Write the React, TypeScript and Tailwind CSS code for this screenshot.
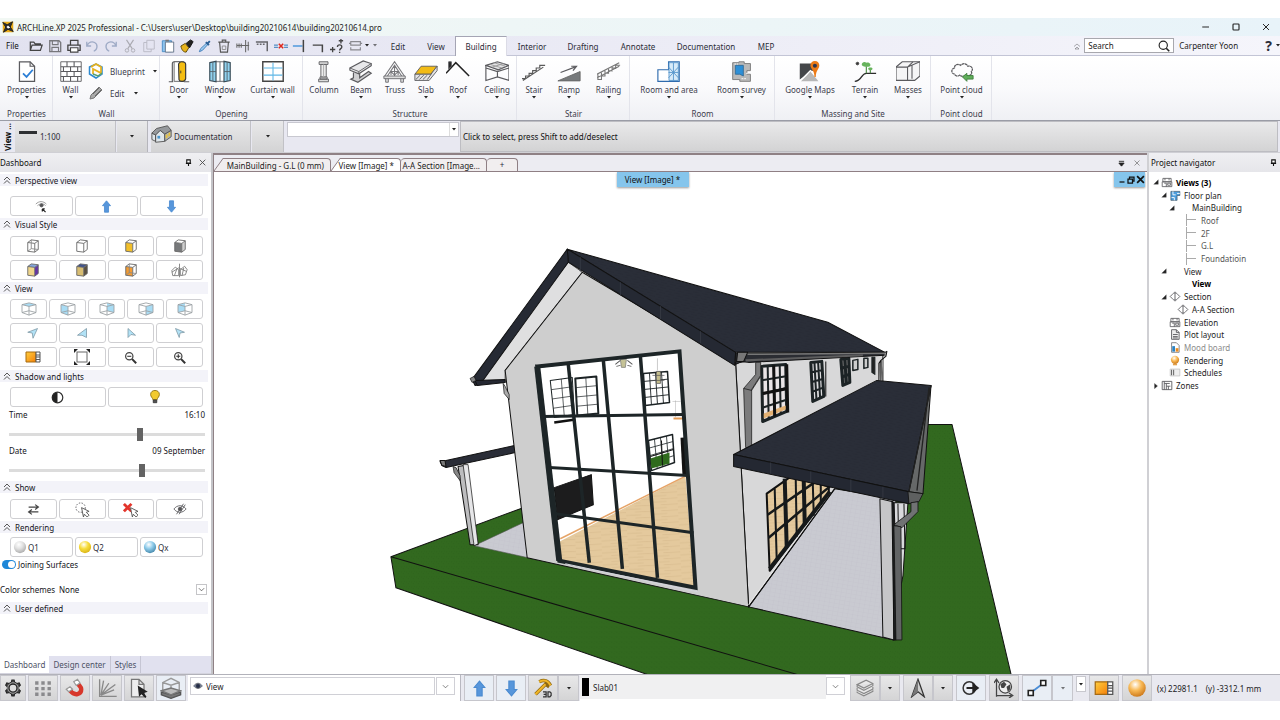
import { useState, type ReactNode } from "react";
import { clsx } from "clsx";

type Point = [number, number];
type Quad = [Point, Point, Point, Point];

interface IconProps {
  w?: number;
  h?: number;
  box?: string;
  children: ReactNode;
}

function Icon({ w = 16, h = 16, box = "0 0 16 16", children }: IconProps) {
  return (
    <svg width={w} height={h} viewBox={box} fill="none" stroke="#5a5a5e" strokeWidth="1" className="shrink-0" aria-hidden="true">
      {children}
    </svg>
  );
}

function Caret({ className = "" }: { className?: string }) {
  return (
    <svg width="4" height="3" viewBox="0 0 4 3" className={clsx("shrink-0", className)} aria-hidden="true">
      <path d="M0 0h4L2 2.6z" fill="#222" />
    </svg>
  );
}

/* ---------- Quick access icons ---------- */

const quickIcons: { name: string; art: ReactNode }[] = [
  { name: "Open", art: <path d="M1.500 13V3.500h4l1.500 2h6V7M1.500 13l2-6H15l-2 6z" strokeWidth="1.400" stroke="#444" /> },
  {
    name: "Save",
    art: (
      <>
        <path d="M2 2h10.500L14.500 4v10.500H2z" stroke="#77777c" strokeWidth="1.500" />
        <path d="M5 2v4.500h6.500V2M4.500 14.500V9.500h7.500v5" stroke="#77777c" strokeWidth="1.300" />
      </>
    ),
  },
  {
    name: "Print",
    art: (
      <>
        <path d="M4 7V1.500h8.500V7" stroke="#444" strokeWidth="1.400" />
        <path d="M1 7h14v6H1z" stroke="#444" strokeWidth="1.500" />
        <path d="M4 10h8.500v5H4z" fill="#fff" stroke="#444" strokeWidth="1.300" />
      </>
    ),
  },
  { name: "Undo", art: <path d="M2 3v5h5M2.500 7.500C4 3.500 8 2.500 11 4c4 2.200 3.500 8-1 10" stroke="#9fabc6" strokeWidth="1.500" /> },
  { name: "Redo", art: <path d="M14 3v5H9M13.500 7.500C12 3.500 8 2.500 5 4c-4 2.200-3.500 8 1 10" stroke="#9fabc6" strokeWidth="1.500" /> },
  {
    name: "Cut",
    art: (
      <>
        <path d="M4 1l6.500 10M12 1L5.500 11" stroke="#aaaab2" strokeWidth="1.300" />
        <circle cx="4.500" cy="13" r="2" stroke="#aaaab2" />
        <circle cx="11.500" cy="13" r="2" stroke="#aaaab2" />
      </>
    ),
  },
  { name: "Copy", art: <path d="M5.500 1.500H14v10H5.500zM5.500 4H2v10.500h8.500v-3" stroke="#b7b7c2" /> },
  {
    name: "Paste",
    art: (
      <>
        <path d="M1.500 2H12v12.500H1.500z" fill="#8ec4ee" stroke="#4389c4" />
        <path d="M5 3.500h9.500v11.500H5z" fill="#fff" stroke="#5b6d82" />
        <path d="M5 .8h4v2H5z" fill="#777" stroke="none" />
      </>
    ),
  },
  {
    name: "Match",
    art: (
      <>
        <path d="M1 8l5-3 4 5-3 5c-3 0-5-2-6-7z" fill="#e6b21c" stroke="#554000" />
        <path d="M7 5l5-4 3 2-4 7z" fill="#222" stroke="#111" />
      </>
    ),
  },
  {
    name: "Pick",
    art: (
      <>
        <path d="M1.500 14.500l1.500-3.500 6.500-6 1.500 1.500-6 6.500z" fill="#9cccf0" stroke="#3c78b6" />
        <path d="M9 3.500l3.500 3.500M11 5l2.500-2.500" stroke="#2b5f96" strokeWidth="2.200" />
      </>
    ),
  },
  {
    name: "Delete",
    art: (
      <>
        <path d="M1.500 3.500h13M6 3V1.300h4V3M3 4l1 11h8l1-11" stroke="#555" strokeWidth="1.300" />
        <path d="M6 8v4h4V8z" stroke="#888" />
      </>
    ),
  },
  { name: "Offset", art: <path d="M1 5v5M3.500 5v5M6 5v5M1 7.500h14M11 1v14M14 3v10" stroke="#666" strokeWidth="1.200" /> },
  { name: "Corner", art: <path d="M1 3.500h13V14M2 6h2M5.500 6h2M9 6h2" stroke="#66666b" strokeWidth="1.700" /> },
  {
    name: "Break",
    art: (
      <>
        <path d="M0 7h4.500M11.500 7H16M0 9.500h4.500M11.500 9.500H16" stroke="#568fc4" strokeWidth="1.300" />
        <path d="M5.500 5.500l5 5M10.500 5.500l-5 5" stroke="#dd2a20" strokeWidth="1.800" />
      </>
    ),
  },
  {
    name: "Extend",
    art: (
      <>
        <path d="M1 8h11" stroke="#4d98dc" strokeWidth="1.700" />
        <path d="M13 1v14" stroke="#444" strokeWidth="1.700" />
      </>
    ),
  },
  { name: "Trim", art: <path d="M2 7h11v8" stroke="#444" strokeWidth="1.700" /> },
  {
    name: "Add query",
    art: <path d="M0 12h6M3 9v6M10 2h5M12.500 0v5M8.500 9c0-3 5-3 5 0 0 2-2.500 2-2.500 4M11 14.500v1.500" stroke="#444" strokeWidth="1.500" />,
  },
  { name: "Layout", art: <path d="M2 3h11v4H2zM2 9.500v3h11v-3M0 5h2M13 5h2" stroke="#8a8a90" strokeWidth="1.300" /> },
];

/* ---------- Ribbon art, 24 x 24 each ---------- */

const ribbonArt: Record<string, ReactNode> = {
  Properties: (
    <>
      <path d="M4 1h12l5 5v17H4z" fill="#fff" strokeWidth="1.400" />
      <path d="M16 1v5h5" strokeWidth="1.300" />
      <path d="M8 14l4 4 7-8" stroke="#2c7fd6" strokeWidth="2" />
    </>
  ),
  Wall: (
    <>
      <path d="M1 1h23v22H1z" fill="#fff" />
      <path d="M1 6.500h23M1 12h23M1 17.500h23M8 1v5.500M16 1v5.500M4 6.500V12M12 6.500V12M20 6.500V12M8 12v5.500M16 12v5.500M4 17.500V23M12 17.500V23M20 17.500V23" strokeWidth="1.200" />
    </>
  ),
  Door: (
    <>
      <path d="M1 23.500h5M18 23.500h6M5 23.500V3.500Q5 1 7 1h7" strokeWidth="1.300" />
      <path d="M7 1h11v22H7z" fill="#fff" />
      <path d="M12 3.500Q13 1 15.500 1 20 1 20 4v16q-.5 3-4 3-3 0-3.500-2z" fill="#f4bd12" stroke="#373737" strokeWidth="1.300" />
      <path d="M14.500 11v3" stroke="#333" />
    </>
  ),
  Window: (
    <>
      <path d="M7 1h11v22H7z" fill="#fff" />
      <path d="M1 2l7-1.500v23L1 22zM24 2l-7-1.500v23l7-1.500z" fill="#90d2ef" stroke="#394c57" strokeWidth="1.300" />
      <path d="M1 12h7M17 12h7M4.500 1.500v21M20.500 1.500v21M12.500 1v22" stroke="#53626a" />
    </>
  ),
  "Curtain wall": (
    <>
      <path d="M1 1h23v22H1z" fill="#fff" stroke="#444" strokeWidth="1.600" />
      <path d="M12.500 2v20M2 8h21M2 16h21" stroke="#5fb7e6" strokeWidth="1.200" />
    </>
  ),
  Column: (
    <>
      <path d="M7 1h10v3H7zM6.500 20.500h11v3h-11zM8 18h8v2.500H8z" fill="#ddd" />
      <path d="M9 4h6v14H9z" fill="#ececec" />
      <path d="M12 4v14" stroke="#aaa" />
    </>
  ),
  Beam: (
    <>
      <path d="M4 13v6l-3 1.500 8 3.500 15-10-3-2-10 7v-5" fill="#cfcfd1" strokeWidth="1.300" />
      <path d="M0 8L15 0l9 3v2.500L10 14.500l-10-4z" fill="#e8e8ea" strokeWidth="1.300" />
      <path d="M0 8l10 4L24 3M10 12v2.500" />
    </>
  ),
  Truss: (
    <>
      <path d="M1 17L12 1l11 16M4 17l8-12 8 12M8 16v-5M16 16v-5M12 5v12M8 12l4 4 4-4z" stroke="#77777b" strokeWidth="1.200" />
      <path d="M0 17h24v3H0zM2 20v4h3v-4M19 20v4h3v-4" fill="#ddd" stroke="#69696d" />
    </>
  ),
  Slab: (
    <>
      <path d="M0 15L7 6h18l-7 9z" fill="#f2bb16" />
      <path d="M0 15h18l7-9v5l-9 11H0z" fill="#e4e4e6" />
      <path d="M1 21l5-5M5 21l5-5M9 21l5-5M14 21l5-7" />
    </>
  ),
  Roof: (
    <>
      <path d="M-1 14L10 2l15 15" stroke="#222" strokeWidth="1.700" />
      <path d="M2 1h3v5l-3 3z" fill="#222" />
    </>
  ),
  Ceiling: (
    <>
      <path d="M0 5l13-4 13 4-12 5z" fill="#e4e4e6" strokeWidth="1.300" />
      <path d="M0 5v17l13-4 13 4V5M0 8l13 4 13-4M13 11v7" strokeWidth="1.300" />
      <path d="M5 4l13 4M9 2l13 4M7 7l13-4" stroke="#999" />
    </>
  ),
  Stair: <path d="M-1 20h4v-3h4v-3h4v-3h4V8h4V5h6M0 22L23 7" stroke="#5a5a5a" strokeWidth="1.300" />,
  Ramp: (
    <>
      <path d="M0 22.500L25 12v10.500z" fill="#777a7c" stroke="#666" />
      <path d="M3 13l16-6M15 6h6l-4 5" strokeWidth="1.300" />
    </>
  ),
  Railing: <path d="M-1 15L24 2M-1 19L24 6M0 15v6h4v-4h4v-3h4v-3h4V8h4V5h5M4 12v6M8 10v6M12 8v6M16 6v6M20 4v5" stroke="#777" strokeWidth="1.200" />,
  "Room and area": (
    <>
      <path d="M0 10h12V1h12v22H0z" fill="#fff" stroke="#2f6bad" strokeWidth="1.300" />
      <path d="M12.500 2H23v20H12.500z" fill="#d8ebf9" stroke="#5594ca" />
      <path d="M12 13h11M17.500 2v20M12 7l11 12M23 7L12 19" stroke="#5594ca" />
    </>
  ),
  "Room survey": (
    <>
      <path d="M2 2h7V1h6v2h7v8h-4v4h4v8H10v-2H2z" fill="#b9b9b9" stroke="#777" />
      <path d="M5 5h9v12l-4-2H5v-5z" fill="#2d8fd6" stroke="#336b97" />
      <path d="M4 3.500h4M17 14h3M12 20h6" stroke="#fff" strokeDasharray="2 1" />
    </>
  ),
  "Google Maps": (
    <>
      <path d="M1 3h16v7L1 21z" fill="#444649" stroke="none" />
      <path d="M2 23l11-11 9 11z" fill="#b7b7b7" stroke="none" />
      <path d="M1 23L13 11l4 3" stroke="#fff" strokeWidth="1.500" />
      <path d="M18 0c3 0 5 2 5 5 0 4-4 6-4 13h-1.500c0-7-4.500-9-4.500-13 0-3 2-5 5-5z" fill="#ec7b17" stroke="none" />
      <circle cx="18" cy="5.500" r="2.300" fill="#2c3650" stroke="none" />
    </>
  ),
  Terrain: (
    <>
      <path d="M1 23c8 0 7-9 13-9h11" stroke="#2c2c2c" strokeWidth="1.500" />
      <path d="M14 14V6M18.500 14v-4" stroke="#4f8f48" strokeWidth="1.300" />
      <path d="M9 5c-1-3 3-5 5-3 3-1 6 2 4 4-2 1-7 1-9-1zM16 9c0-2 5-2 5 0-1 2-4 2-5 0z" fill="#67b35c" stroke="none" />
      <path d="M2.500 1.500l3 3M5.500 1.500l-3 3M2 3h4M4 1v4" stroke="#333" />
    </>
  ),
  Masses: (
    <>
      <path d="M-1 7l7-6h20v16l-6 5H-1z" fill="#f5f5f6" strokeWidth="1.300" />
      <path d="M-1 7h13v15M12 7l6-6M12 7l14-6M17 5v15" strokeWidth="1.200" />
    </>
  ),
  "Point cloud": (
    <>
      <path d="M4 15c-4-1-4-6 0-7 0-4 4-5 7-3 3-3 7-2 8 1 4-1 7 3 4 6 1 2 0 3-1 4-2 1-4 1-5 0-2 2-5 2-7 0-2 2-5 1-6-1z" strokeDasharray="3 .5" strokeWidth="1.400" />
      <path d="M13 18l5-4v2.500h7v4h-7V23z" fill="#60ae5b" stroke="#3d7e3b" />
    </>
  ),
};

interface Tool {
  label: string;
  width: string;
  menu?: boolean;
}

const toolGroups: { title: string; tools: Tool[] }[] = [
  {
    title: "Opening",
    tools: [
      { label: "Door", width: "w-[38px]" },
      { label: "Window", width: "w-11" },
      { label: "Curtain wall", width: "w-[61px]" },
    ],
  },
  {
    title: "Structure",
    tools: [
      { label: "Column", width: "w-[42px]", menu: false },
      { label: "Beam", width: "w-8" },
      { label: "Truss", width: "w-9", menu: false },
      { label: "Slab", width: "w-[26px]" },
      { label: "Roof", width: "w-[38px]" },
      { label: "Ceiling", width: "w-10" },
    ],
  },
  {
    title: "Stair",
    tools: [
      { label: "Stair", width: "w-[34px]" },
      { label: "Ramp", width: "w-9" },
      { label: "Railing", width: "w-[43px]" },
    ],
  },
  {
    title: "Room",
    tools: [
      { label: "Room and area", width: "w-[78px]" },
      { label: "Room survey", width: "w-[67px]" },
    ],
  },
  {
    title: "Massing and Site",
    tools: [
      { label: "Google Maps", width: "w-[70px]" },
      { label: "Terrain", width: "w-10" },
      { label: "Masses", width: "w-[46px]" },
    ],
  },
  { title: "Point cloud", tools: [{ label: "Point cloud", width: "w-[61px]" }] },
];

function RibbonButton({ label, width, menu = true }: Tool) {
  return (
    <button className={clsx("flex shrink-0 flex-col items-center whitespace-nowrap", width)}>
      <Icon w={24} h={24} box="-1 -1 27 27">{ribbonArt[label]}</Icon>
      <span className="leading-[11px]">{label}</span>
      {menu && <Caret className="mt-px" />}
    </button>
  );
}

function RibbonGroup({ title, children }: { title: string; children: ReactNode }) {
  return (
    <section className="flex shrink-0 flex-col shadow-[inset_-1px_0_0_#e3e4eb]">
      <div className="flex h-[51px] pt-1">{children}</div>
      <h2 className="text-center leading-[13px]">{title}</h2>
    </section>
  );
}

/* ---------- Title and menu ---------- */

function TitleBar() {
  return (
    <header className="flex h-[18px] items-center bg-linear-to-r from-[#f2f8f4] to-[#e8f3f9] pl-0.5 text-[#1b1b1b]">
      <Icon w={12} h={12}>
        <path d="M1 1h14v14H1z" fill="#e9ab18" stroke="none" />
        <path d="M1 2l6 3 7-4-3 7 4 6-7-3-6 4 3-7zM4 8l4-3 4 3-4 4z" fill="#333" stroke="#222" strokeWidth="1.300" />
        <path d="M6 8l2-2 3 3-3 1z" fill="#fff" stroke="none" />
      </Icon>
      <h1 className="ml-[3px] whitespace-nowrap">
        ARCHLine.XP 2025 Professional - C:\Users\user\Desktop\building20210614\building20210614.pro
      </h1>
      <div className="ml-auto flex items-center gap-[18px] pr-2">
        <button aria-label="Minimize"><Icon w={12} h={12}><path d="M3 8h9" stroke="#222" strokeWidth="1.300" /></Icon></button>
        <button aria-label="Maximize"><Icon w={12} h={12}><rect x="4" y="4" width="8" height="8" rx="1" stroke="#222" strokeWidth="1.500" /></Icon></button>
        <button aria-label="Close"><Icon w={12} h={12}><path d="M4 4l8 8M12 4l-8 8" stroke="#222" strokeWidth="1.300" /></Icon></button>
      </div>
    </header>
  );
}

const menuTabs = [
  { label: "Edit", width: "w-[38px]" },
  { label: "View", width: "w-[38px]" },
  { label: "Building", width: "w-[52px]" },
  { label: "Interior", width: "w-[50px]" },
  { label: "Drafting", width: "w-[52px]" },
  { label: "Annotate", width: "w-[58px]" },
  { label: "Documentation", width: "w-[78px]" },
  { label: "MEP", width: "w-[42px]" },
];

function MenuBar() {
  const [tab, setTab] = useState("Building");
  return (
    <div className="flex h-5 items-center border-b border-[#c3c5d6] bg-linear-to-r from-[#e2e2f0] to-[#f5f5fb]">
      <button className="w-[27px] shrink-0 pl-1.5 text-left text-[#111]">File</button>
      <div className="flex w-[338px] shrink-0 justify-between">
        {quickIcons.map((q) => (
          <button key={q.name} aria-label={q.name} className="flex w-[18px] justify-center">
            <Icon w={14} h={14}>{q.art}</Icon>
          </button>
        ))}
      </div>
      <Caret />
      <Caret className="ml-1 opacity-60" />
      <nav className="ml-0.5 flex h-full self-end">
        {menuTabs.map((t) => (
          <button
            key={t.label}
            onClick={() => setTab(t.label)}
            className={clsx(
              "h-5 shrink-0 border-x border-t pb-px",
              t.width,
              tab === t.label ? "border-[#a5a5b4] border-r-[#dcdce6] bg-white" : "border-transparent"
            )}
          >
            {t.label}
          </button>
        ))}
      </nav>
      <div className="ml-auto flex shrink-0 items-center">
        <Icon w={8} h={8}><path d="M2 9l6-5 6 5M4 14l4-4 4 4z" /></Icon>
        <label className="ml-[3px] flex h-[15px] w-[90px] items-center border border-[#a8a8ae] bg-white px-[3px]">
          <input aria-label="Search" placeholder="Search" className="w-full min-w-0 outline-none placeholder:text-[#222]" />
          <Icon w={12} h={12}>
            <circle cx="7" cy="7" r="5.500" stroke="#222" strokeWidth="1.500" />
            <path d="M11 11l4 4" stroke="#222" strokeWidth="2.200" />
          </Icon>
        </label>
        <span className="ml-[5px] w-[86px] whitespace-nowrap text-[#222]">Carpenter Yoon</span>
        <button className="flex items-center gap-1 text-sm leading-none font-bold">? <Caret /></button>
      </div>
    </div>
  );
}

function Ribbon() {
  return (
    <div className="flex h-[65px] border-b border-[#9a9ca6] bg-linear-to-b from-white via-[#fafafc] to-[#eff0f4] text-[#3c3d4c]">
      <RibbonGroup title="Properties">
        <RibbonButton label="Properties" width="w-[53px]" />
      </RibbonGroup>
      <RibbonGroup title="Wall">
        <RibbonButton label="Wall" width="w-[35px]" />
        <div className="flex w-[72px] flex-col">
          <button className="flex h-[22px] items-center">
            <Icon w={16} h={16}>
              <path d="M1.500 4L8 1l6 3v7l-6 4-6.500-4z" stroke="#2d89cf" strokeWidth="1.500" />
              <path d="M3 4l5-3 5 3v6L5 6v5" stroke="#e7b11d" strokeWidth="1.700" />
              <path d="M5 11l5 2 4-3" stroke="#56a06d" strokeWidth="1.500" />
            </Icon>
            <span className="ml-[6px] w-[43px] text-left">Blueprint</span>
            <Caret />
          </button>
          <button className="flex h-[22px] items-center">
            <Icon w={16} h={16}>
              <path d="M2 14l1-4 8-8 3 3-8 8z" fill="#a9a9a9" stroke="#777" />
              <path d="M5 9l6-6M7 11l6-6" stroke="#666" />
            </Icon>
            <span className="ml-[6px] w-6 text-left">Edit</span>
            <Caret />
          </button>
        </div>
      </RibbonGroup>
      {toolGroups.map((g) => (
        <RibbonGroup key={g.title} title={g.title}>
          {g.tools.map((t) => (
            <RibbonButton key={t.label} {...t} />
          ))}
        </RibbonGroup>
      ))}
    </div>
  );
}

const steel = "bg-linear-to-b from-[#e9e9ea] to-[#d3d3d4]";

function ViewBar() {
  return (
    <div className="flex h-8 items-stretch gap-px border-b border-[#cfcfd4] bg-[#e8e8f1]">
      <div className="flex w-[14px] shrink-0 items-center justify-center overflow-hidden">
        <span className="rotate-180 whitespace-nowrap font-bold text-[#111] [writing-mode:vertical-rl]">View ...</span>
      </div>
      <button className={clsx("flex w-[101px] shrink-0 items-center gap-[3px] border-r border-[#c1c1c6] pl-1", steel)}>
        <span className="mb-2 h-[3px] w-[18px] bg-[#2e3033]" />
        <span>1:100</span>
      </button>
      <button aria-label="Scale list" className={clsx("flex w-[31px] shrink-0 items-center justify-center border-r border-[#b5b5bb]", steel)}><Caret /></button>
      <button className={clsx("ml-0.5 flex w-[100px] shrink-0 items-center gap-px border-r border-[#c1c1c6]", steel)}>
        <span className="mb-1.5 flex">
          <Icon w={22} h={20} box="0 2 24 20">
            <path d="M1 11l4 2v7l-4-2zM5 13l5-5 5 4v8l-10 1z" fill="#dfe6ea" stroke="#555" />
            <path d="M15 12l7-4v7l-7 5z" fill="#b0b5b9" stroke="#555" />
            <path d="M1 11l5-5 12-3 4 5-7 4-5-4-5 5z" fill="#96999c" stroke="#555" />
            <path d="M7 14h3v3H7z" fill="#4a95cc" stroke="none" />
            <path d="M16 13l2-1v4l-2 1zM19 11l2-1v4l-2 1z" fill="#e8c23b" stroke="none" />
          </Icon>
        </span>
        <span>Documentation</span>
      </button>
      <button aria-label="Documentation list" className={clsx("flex w-8 shrink-0 items-center justify-center border-r border-[#c1c1c6]", steel)}><Caret /></button>
      <div className="w-[174px] shrink-0 pt-px pl-0.5">
        <div className="flex h-[15px] border border-[#c8c8d0] bg-white">
          <input aria-label="Command" className="min-w-0 flex-1 outline-none" />
          <button aria-label="Command history" className="flex w-[9px] items-center justify-center border-l border-[#ddd]"><Caret /></button>
        </div>
      </div>
      <p className={clsx("mr-0.5 flex flex-1 items-center border border-[#bdbdc2] pl-0.5 text-[#111]", steel)}>
        Click to select, press Shift to add/deselect
      </p>
    </div>
  );
}

/* ---------- Dashboard ---------- */

function SectionTitle({ children, className = "" }: { children: ReactNode; className?: string }) {
  return (
    <h3 className={clsx("mr-[3px] flex h-3 items-center gap-1 bg-[#f3f3f9] pl-[3px] text-[#15151c]", className)}>
      <Icon w={8} h={8}><path d="M2 8l6-6 6 6M2 15l6-6 6 6" stroke="#444" strokeWidth="1.800" /></Icon>
      {children}
    </h3>
  );
}

function ToolGrid({ columns, children, className = "" }: { columns: string; children: ReactNode; className?: string }) {
  return <div className={clsx("mr-2 ml-2.5 grid gap-x-0.5 gap-y-1", columns, className)}>{children}</div>;
}

function Tile({ name, children, left = false }: { name?: string; children: ReactNode; left?: boolean }) {
  return (
    <button
      aria-label={name}
      className={clsx("flex h-5 items-center rounded-[3px] border border-[#cfcfd2] bg-white", left ? "gap-px pl-0.5" : "justify-center")}
    >
      {children}
    </button>
  );
}

function Cube({ front = "#fff", side = "#fff", top = "#fff", hidden = false }: { front?: string; side?: string; top?: string; hidden?: boolean }) {
  return (
    <Icon w={14} h={14}>
      <path d="M2 4l8 1v10l-8-1z" fill={front} stroke="none" />
      <path d="M10 5l4-3v10l-4 3z" fill={side} stroke="none" />
      <path d="M2 4l4-3 8 1-4 3z" fill={top} stroke="none" />
      <path d="M2 4l4-3 8 1v10l-4 3-8-1zM2 4l8 1v10M10 5l4-3" stroke="#666" />
      {hidden && <path d="M6 1v10l8 1M6 11l-4 3" stroke="#888" />}
    </Icon>
  );
}

function BoxView({ face }: { face: string }) {
  return (
    <Icon w={18} h={14} box="0 0 20 16">
      <path d={face} fill="#a9dcf4" stroke="none" />
      <path d="M2 3l8-2 8 2v9l-8 3-8-3zM2 3l8 2 8-2M10 5v10M2 12l8-2 8 2" stroke="#9aa0a4" />
    </Icon>
  );
}

const boxFaces = [
  { name: "Top view", face: "M2 3l8-2 8 2-8 2z" },
  { name: "Left view", face: "M2 3l8 2v10l-8-3z" },
  { name: "Back view", face: "M10 1l8 2v9l-8-2z" },
  { name: "Right view", face: "M18 3l-8 2v10l8-3z" },
  { name: "Front view", face: "M2 3l8-2v9l-8 2z" },
];

const planes = ["M1 7l13-5-6 13-1-7z", "M14 14V2L2 11l6 0z", "M4 2v12l4-4 6 1z", "M2 2l12 5-6 1-1 6z"];

function ArrowUp({ size = 14 }: { size?: number }) {
  return <Icon w={size} h={size}><path d="M8 1l5 6h-2.500v8h-5V7H3z" fill="#5796db" stroke="#4a8ad0" /></Icon>;
}

function ArrowDown({ size = 14 }: { size?: number }) {
  return <Icon w={size} h={size}><path d="M8 15l5-6h-2.500V1h-5v8H3z" fill="#5796db" stroke="#4a8ad0" /></Icon>;
}

function Film({ size = 16 }: { size?: number }) {
  return (
    <Icon w={size} h={size}>
      <path d="M1 3h10v10H1z" fill="url(#film)" stroke="#a66a10" />
      <path d="M11 3h4v10h-4zM11 6h4M11 8h4M11 10.500h4" fill="#fff" stroke="#555" />
    </Icon>
  );
}

function Zoomer({ plus = false }: { plus?: boolean }) {
  return (
    <Icon w={13} h={13}>
      <circle cx="6.500" cy="6.500" r="4.500" stroke="#444" strokeWidth="1.500" />
      <path d="M10 10l5 5" stroke="#333" strokeWidth="2.500" />
      <path d={plus ? "M4 6.500h5M6.500 4v5" : "M4 6.500h5"} stroke="#333" strokeWidth="1.300" />
    </Icon>
  );
}

function Cursor({ x, y }: { x: number; y: number }) {
  return <path transform={`translate(${x} ${y})`} d="M0 0l8 4-3 1 3 3-2 2-3-3-1 3z" fill="#fff" stroke="#555" />;
}

function Ball({ id, size = 15 }: { id: string; size?: number }) {
  return (
    <svg width={size} height={size} viewBox="0 0 16 16" className="shrink-0" aria-hidden="true">
      <circle cx="8" cy="8" r="7" fill={`url(#${id})`} />
    </svg>
  );
}

function TimeSlider({ label, value, start, max }: { label: string; value: string; start: number; max: number }) {
  const [pos, setPos] = useState(start);
  return (
    <label className="mr-1.5 ml-[9px] block h-9">
      <span className="flex h-3 items-center justify-between text-[#15151c]">
        <span>{label}</span>
        <span>{value}</span>
      </span>
      <input
        type="range"
        min={0}
        max={max}
        value={pos}
        onChange={(e) => setPos(Number(e.target.value))}
        className="mt-1.5 block h-4 w-full appearance-none bg-transparent [&::-webkit-slider-runnable-track]:h-[3px] [&::-webkit-slider-runnable-track]:bg-[#dcdcdc] [&::-webkit-slider-thumb]:-mt-[5px] [&::-webkit-slider-thumb]:h-[13px] [&::-webkit-slider-thumb]:w-1.5 [&::-webkit-slider-thumb]:appearance-none [&::-webkit-slider-thumb]:bg-[#636363]"
      />
    </label>
  );
}

function Dashboard() {
  const [joined, setJoined] = useState(true);
  return (
    <aside className="flex w-[213px] shrink-0 flex-col border-r-2 border-[#c4c4c8] bg-white">
      <div className="flex h-[19px] shrink-0 items-center bg-linear-to-b from-[#efeff2] to-[#e6e6ea] text-[#111]">
        <h2>Dashboard</h2>
        <button aria-label="Pin dashboard" className="ml-auto"><Pin /></button>
        <button aria-label="Close dashboard" className="mr-1 ml-[6px]"><Icon w={9} h={9}><path d="M3 3l10 10M13 3L3 13" stroke="#444" strokeWidth="1.500" /></Icon></button>
      </div>

      <SectionTitle className="mt-0.5">Perspective view</SectionTitle>
      <ToolGrid columns="grid-cols-3" className="mt-2.5">
        <Tile name="Look around">
          <Icon w={13} h={13}>
            <path d="M1 5c4-4 9-4 13 0M3 7c3-3 8-3 10 0" stroke="#888" />
            <circle cx="8" cy="6.500" r="2" fill="#555" />
            <path d="M9 11l4 4M9 11v3M9 11h3" stroke="#222" strokeWidth="1.500" />
          </Icon>
        </Tile>
        <Tile name="Move up"><ArrowUp size={13} /></Tile>
        <Tile name="Move down"><ArrowDown size={13} /></Tile>
      </ToolGrid>

      <SectionTitle className="mt-0.5">Visual Style</SectionTitle>
      <ToolGrid columns="grid-cols-4" className="mt-1.5">
        <Tile name="Wireframe"><Cube hidden /></Tile>
        <Tile name="Hidden line"><Cube /></Tile>
        <Tile name="Flat colour"><Cube front="#f2bf2a" /></Tile>
        <Tile name="Greyscale"><Cube front="#77797b" side="#cfcfcf" /></Tile>
        <Tile name="Shaded"><Cube front="#efd58b" side="#6433a8" top="#83a5dc" /></Tile>
        <Tile name="Textured"><Cube front="#d8bd72" side="#5a5040" top="#40538d" /></Tile>
        <Tile name="Transparent"><Cube front="#f49b31" hidden /></Tile>
        <Tile name="Sketch">
          <Icon w={17} h={15} box="0 0 20 16">
            <path d="M1 8l4-4 4 3v7H2zM11 7l5-4 3 4-2 6-6 1zM10 0v16M1 10l8-5 9 4M4 14l3-8M13 14l2-9" stroke="#777" />
          </Icon>
        </Tile>
      </ToolGrid>

      <SectionTitle className="mt-0.5">View</SectionTitle>
      <ToolGrid columns="grid-cols-5" className="mt-[5px]">
        {boxFaces.map((b) => (
          <Tile key={b.name} name={b.name}><BoxView face={b.face} /></Tile>
        ))}
      </ToolGrid>
      <ToolGrid columns="grid-cols-4" className="mt-1">
        {planes.map((d, i) => (
          <Tile key={d} name={`Axonometry ${i + 1}`}>
            <Icon w={12} h={12}><path d={d} fill="#b2e2f6" stroke="#7994a2" /></Icon>
          </Tile>
        ))}
        <Tile name="Saved views"><Film size={16} /></Tile>
        <Tile name="Zoom all">
          <Icon>
            <rect x="3" y="3" width="10" height="10" stroke="#666" />
            <path d="M0 4V0h4L0 4zM12 0h4v4zM0 12v4h4zM16 12v4h-4z" fill="#222" stroke="none" />
          </Icon>
        </Tile>
        <Tile name="Zoom out"><Zoomer /></Tile>
        <Tile name="Zoom in"><Zoomer plus /></Tile>
      </ToolGrid>

      <SectionTitle className="mt-[3px]">Shadow and lights</SectionTitle>
      <ToolGrid columns="grid-cols-2" className="mt-[5px]">
        <Tile name="Shadow">
          <Icon w={13} h={13}>
            <circle cx="8" cy="8" r="6.500" fill="#fff" stroke="#333" strokeWidth="1.500" />
            <path d="M8 1.500a6.500 6.500 0 0 0 0 13z" fill="#222" stroke="none" />
          </Icon>
        </Tile>
        <Tile name="Lights">
          <Icon w={14} h={14}>
            <path d="M5.500 11c0-2-2.500-3-2.500-6 0-6 10-6 10 0 0 3-2.500 4-2.500 6z" fill="#f2ca2f" stroke="#8a6f14" />
            <path d="M6 11.500h4v3H6z" fill="#555" stroke="#333" />
          </Icon>
        </Tile>
      </ToolGrid>
      <div className="mt-px h-[73px]">
        <TimeSlider label="Time" value="16:10" start={970} max={1440} />
        <TimeSlider label="Date" value="09 September" start={250} max={365} />
      </div>

      <SectionTitle>Show</SectionTitle>
      <ToolGrid columns="grid-cols-4" className="mt-1.5">
        <Tile name="Swap"><Icon w={13} h={13}><path d="M2 5h11M10 2l4 3-4 3M14 11H3M6 8l-4 3 4 3" stroke="#444" strokeWidth="1.500" /></Icon></Tile>
        <Tile name="Isolate"><Icon w={15} h={15}><circle cx="6" cy="6" r="5" strokeDasharray="1.500 1.500" /><Cursor x={7} y={6} /></Icon></Tile>
        <Tile name="Hide selected"><Icon w={15} h={15}><path d="M1 2l8 8M9 2l-8 8" stroke="#e3342b" strokeWidth="3" /><Cursor x={8} y={6} /></Icon></Tile>
        <Tile name="Show hidden"><Icon w={14} h={14}><path d="M1 8c4-5 10-5 14 0-4 5-10 5-14 0zM4 14L12 2M7 14l7-11" /><circle cx="8" cy="8" r="2" fill="#555" /></Icon></Tile>
      </ToolGrid>

      <SectionTitle className="mt-0.5">Rendering</SectionTitle>
      <ToolGrid columns="grid-cols-3" className="mt-1">
        <Tile left><Ball id="grey" size={14} />Q1</Tile>
        <Tile left><Ball id="yellow" size={14} />Q2</Tile>
        <Tile left><Ball id="blue" size={14} />Qx</Tile>
      </ToolGrid>
      <label className="mt-px flex h-3 items-center gap-0.5 pl-0.5 text-[#15151c]">
        <input type="checkbox" role="switch" checked={joined} onChange={(e) => setJoined(e.target.checked)} className="sr-only" />
        <span className={clsx("flex h-[9px] w-[14px] items-center rounded-full px-px", joined ? "justify-end bg-[#1e87d8]" : "justify-start bg-[#999]")}>
          <span className="size-[7px] rounded-full bg-white" />
        </span>
        Joining Surfaces
      </label>
      <label className="mt-[13px] flex h-3 items-center text-[#15151c]">
        <span className="w-[59px]">Color schemes</span>
        <select className="min-w-0 flex-1 appearance-none outline-none"><option>None</option></select>
        <span className="mr-1 flex size-[11px] items-center justify-center border border-[#c5c5c8]">
          <Icon w={7} h={7}><path d="M2 5l6 6 6-6" stroke="#333" strokeWidth="1.500" /></Icon>
        </span>
      </label>
      <SectionTitle className="mt-[7px]">User defined</SectionTitle>

      <div className="mt-auto flex h-[18px] shrink-0 items-stretch border-b border-[#d4d4de] bg-[#e1e1ef] text-[#4d5165]">
        <button className="bg-white px-1">Dashboard</button>
        <button className="border-r border-[#c6c6d4] px-1">Design center</button>
        <button className="border-r border-[#c6c6d4] px-1">Styles</button>
      </div>
    </aside>
  );
}

function Pin() {
  return <Icon w={7} h={7}><path d="M4 2h8v7H4zM2 10h12M8 10v6" fill="#fff" stroke="#111" strokeWidth="2.500" /></Icon>;
}

/* ---------- 3D model ---------- */

function lerp(a: Point, b: Point, t: number): Point {
  return [a[0] + (b[0] - a[0]) * t, a[1] + (b[1] - a[1]) * t];
}

// Draws a framed window with evenly split panes on any four-sided face
function PaneGrid({ quad, cols, rows, fill = "#fff", bar = 1, frame = 2 }: { quad: Quad; cols: number; rows: number; fill?: string; bar?: number; frame?: number }) {
  const [tl, tr, br, bl] = quad;
  const lines: string[] = [];
  for (let i = 1; i < cols; i++) {
    lines.push(`M${lerp(tl, tr, i / cols)}L${lerp(bl, br, i / cols)}`);
  }
  for (let i = 1; i < rows; i++) {
    lines.push(`M${lerp(tl, bl, i / rows)}L${lerp(tr, br, i / rows)}`);
  }
  return (
    <g stroke="#1c2325">
      <polygon points={quad.join(" ")} fill={fill} strokeWidth={frame} />
      <path d={lines.join("")} strokeWidth={bar} />
    </g>
  );
}

function House() {
  return (
    <svg viewBox="213 172 934 501" className="absolute inset-0 size-full" preserveAspectRatio="xMidYMid slice" role="img" aria-label="House model">
      <defs>
        <pattern id="wood" width="26" height="6" patternUnits="userSpaceOnUse" patternTransform="rotate(-3)">
          <path d="M0 0h26v6H0z" fill="#e4c99d" />
          <path d="M0 1h15M9 4h17" stroke="#d6b98b" strokeWidth=".6" />
        </pattern>
        <pattern id="tiles" width="5" height="4" patternUnits="userSpaceOnUse" patternTransform="rotate(10)">
          <path d="M0 0h5v4H0z" fill="#c9cad1" />
          <path d="M0 0h5M0 0v4" stroke="#c1c2ca" strokeWidth=".5" />
        </pattern>
        <pattern id="slate" width="9" height="5" patternUnits="userSpaceOnUse" patternTransform="rotate(12)">
          <path d="M0 0h9v5H0z" fill="#2a2e38" />
          <path d="M0 1h6M3 3.500h6" stroke="#252932" strokeWidth=".6" />
        </pattern>
        <pattern id="grass" width="5" height="5" patternUnits="userSpaceOnUse">
          <path d="M0 0h5v5H0z" fill="#32691f" />
          <path d="M1 1h1M3 3h1M4 0h1" stroke="#2c5f1b" strokeWidth=".8" />
        </pattern>
      </defs>

      <g stroke="#111" strokeWidth="1" strokeLinejoin="round">
        {/* ground */}
        <polygon points="391,556 523,507 740,440 928,424 951,424 1011,678 660,678 396,587" fill="url(#grass)" />
        <path d="M391 556L640 628L812 678" fill="none" />
        <polygon points="514,452 740,440 740,500 523,507" fill="#fff" stroke="none" />
        <polygon points="474,545 523,522 528,557" fill="url(#tiles)" stroke="#555" strokeWidth=".6" />

        {/* left porch */}
        <polygon points="458,466 464,465 478,544 470,544" fill="#bdbdbf" />
        <polygon points="463,464 468,464 478,543 474,545" fill="#e6e6e8" strokeWidth=".7" />
        <path d="M453 466l3 1 4 8v5l-6-8z" fill="#888" strokeWidth=".7" />
        <polygon points="440,461 446,460 514,445 515,452 446,467 442,465" fill="#2a2d37" />
        <path d="M440 460l5 0 1 6-4-1z" fill="#777" />

        {/* walls */}
        <polygon points="735,362 882,354 882,410 834,490 748,606" fill="#d8d8d9" />
        <polygon points="568,262 582,272 505,370 505,382 476,381" fill="#dfdfe0" strokeWidth=".7" />
        <polygon points="582,272 735,363 748,606 527,557 505,370" fill="#cecece" />

        {/* right terrace */}
        <polygon points="748,606 834,488 895,498 893,639" fill="url(#tiles)" />
        <path d="M748 604L829 492" stroke="#e4e4e4" fill="none" />
        <path d="M748 606L834 488" fill="none" />

        {/* big glass wall */}
        <polygon points="537,367 679,351 695,587 559,559" fill="#fff" />
        <polygon points="559,541 685,476 694,587 560,559" fill="url(#wood)" stroke="none" />
        <path d="M560 538L684 476" stroke="#e6a467" strokeWidth="1.500" fill="none" />
        <PaneGrid quad={[[550, 380], [572, 377], [574, 414], [554, 417]]} cols={2} rows={4} bar={0.7} frame={1} />
        <PaneGrid quad={[[575, 378], [596, 376], [598, 413], [577, 415]]} cols={2} rows={4} bar={0.7} frame={2} />
        <path d="M554 422L575 419" strokeWidth="2.500" />
        <PaneGrid quad={[[643, 373], [667, 371], [669, 402], [645, 405]]} cols={4} rows={4} bar={0.9} frame={1.5} />
        <PaneGrid quad={[[648, 440], [672, 434], [674, 462], [651, 470]]} cols={4} rows={4} bar={0.8} frame={1.5} />
        <polygon points="650,458 669,452 669,463 651,468" fill="#2f6b1d" stroke="none" />
        <path d="M661 440l1 25M650 456l23-7" strokeWidth="1" />
        <path d="M682 437l2 38" strokeWidth="4" />
        <polygon points="554,487 591,474 593,504 557,519" fill="#1c1c1d" />
        <path d="M620 359h6l-1 8h-4z" fill="#c5c296" stroke="#777" strokeWidth=".7" />
        <path d="M615 364l5-4M616 366l4-1M632 364l-5-4M631 366l-4-1" stroke="#555" fill="none" />
        <path d="M657 358v12" stroke="#aaa" strokeWidth=".6" />
        <path d="M656 371h4v12h-4zM652 375h12M650 380h14" fill="#c5be8d" stroke="#555" strokeWidth=".7" />
        <path d="M675 400v17M672 401h8" stroke="#aaa" strokeWidth=".5" />
        <path d="M673 418h9" stroke="#e39b56" strokeWidth="2" />
        <g fill="none" stroke="#1d2527" strokeWidth="3.500" strokeLinejoin="miter">
          <path d="M568 364L589 562M603 360L622 568M640 356L657 577" />
          <path d="M542 416L683 414M549 467L687 475M555 513L693 532" strokeWidth="3" />
          <polygon points="537,366 679,351 695,587 559,560" strokeWidth="4" />
          <path d="M537 366L559 560" strokeWidth="6" />
        </g>
        <path d="M565 563L697 591" stroke="#d4d4dc" />

        {/* upper side windows */}
        <PaneGrid quad={[[761, 366], [785, 364], [786, 411], [762, 421]]} cols={4} rows={4} bar={2} frame={3} fill="#e9e4e6" />
        <path d="M763 413l22-8v4l-22 9z" fill="#e3b173" stroke="none" />
        <path d="M773 365l1 51M786 364l1 48M762 393l25-5" strokeWidth="3" />
        <PaneGrid quad={[[810, 362], [821, 361], [823, 396], [812, 401]]} cols={3} rows={4} bar={2} frame={3} fill="#dcdcde" />
        <path d="M825 361v35" />
        <PaneGrid quad={[[840, 359], [848, 358], [849, 382], [842, 385]]} cols={2} rows={3} bar={3} frame={3} fill="#777" />
        <PaneGrid quad={[[852, 360], [857, 359], [857, 369], [852, 370]]} cols={1} rows={1} frame={1.5} fill="#ccc" />
        <PaneGrid quad={[[863, 358], [867, 358], [867, 367], [863, 368]]} cols={1} rows={1} frame={1.5} fill="#ccc" />
        <PaneGrid quad={[[871, 357], [874, 357], [874, 374], [871, 372]]} cols={1} rows={1} frame={1} fill="#222" />

        {/* lower side window */}
        <polygon points="766,493 790,476 828,486 828,492 769,570" fill="url(#wood)" strokeWidth="2" />
        <g fill="none" stroke="#16191a">
          <path d="M767 514L825 474M768 537L830 485" strokeWidth="2.500" />
          <path d="M774 488l2 70M795 478l1 58M812 482l1 33M820 484v20" strokeWidth="2" />
          <path d="M784 478l2 68M803 480l1 44" strokeWidth="4" />
          <path d="M769 568L829 491" strokeWidth="4" />
        </g>

        {/* main roof */}
        <polygon points="567,249 827,322 884,352 735,352" fill="url(#slate)" />
        <polygon points="567,249 735,352 734,365 568,262" fill="#252933" />
        <polygon points="567,249 568,262 480,384 475,385 472,379" fill="#262a34" />
        <polygon points="475,380 505,379 505,382 477,385" fill="#252832" />
        <path d="M470 378l4-2 2 4-4 2z" fill="#888" strokeWidth=".7" />
        <path d="M503 383l2 3 4 8v5l-5-6z" fill="#aaa" strokeWidth=".7" />
        <polygon points="735,353 884,352 884,355 748,362 742,361 735,364" fill="#2b2d33" />
        <polygon points="737,352 747,352 743,361 736,361" fill="#777" />
        <path d="M747 354L884 353" stroke="#777" strokeWidth="1.500" />
        <path d="M745 360L862 355" stroke="#5d5d5e" strokeWidth="2" />
        <path d="M884 352l2-1-1 5-5 4v20M880 360l-2 3v17" fill="#999" />

        {/* downpipe */}
        <g strokeWidth=".7">
          <polygon points="755,362 760,362 760,375 751,389 751,447 745,447 743,388 755,374" fill="#7b7b7c" />
          <path d="M743 388l8 2 9-14" fill="none" />
        </g>

        {/* porch posts */}
        <polygon points="893,502 907,502 902,575 897,600" fill="#d9d9dc" />
        <path d="M897 503l1 60M903 503l1 45h-4" fill="none" />
        <polygon points="879,498 892,501 893,639 882,636" fill="#c6c6c8" />
        <polygon points="891,501 893,502 895,639 893,639" fill="#1e2022" />

        {/* annex roof */}
        <polygon points="733,454 876,380 930,385 908,491" fill="url(#slate)" />
        <polygon points="733,454 908,491 908,503 733,466" fill="#242832" />
        <polygon points="930,385 922,493 908,491" fill="#666868" />
        <path d="M928 387L916 490M930 385L908 491" stroke="#222" strokeWidth="1.300" />
        <g strokeWidth=".8">
          <polygon points="907,491 922,493 918,501 908,503" fill="#5e6060" />
          <polygon points="910,502 917,501 917,511 901,527 893,524 910,511" fill="#707273" />
          <polygon points="893,525 900,526 901,639 895,639" fill="#626465" />
        </g>
        <path d="M580 257v14M620 282v13M660 306v13M700 331v12M770 462v11M810 471v11M850 479v12M882 486v11" stroke="#343842" />
      </g>
    </svg>
  );
}

const docTabs = [
  { label: "MainBuilding - G.L (0 mm)", width: "w-[117px]" },
  { label: "View [Image] *", width: "w-[70px]" },
  { label: "A-A Section [Image...", width: "w-[86px]" },
];

function Workspace() {
  const [active, setActive] = useState(1);
  return (
    <main className="flex min-w-0 flex-1 flex-col border-t-2 border-l border-[#8f8185] bg-[#ececf2]">
      <div className="flex h-[17px] shrink-0 items-end border-b border-[#8f7f84]">
        {docTabs.map((t, i) => (
          <button
            key={t.label}
            onClick={() => setActive(i)}
            className={clsx(
              "relative flex h-[13px] shrink-0 items-center justify-end rounded-t-sm border-t border-r border-[#8f7f84] pr-1.5 whitespace-nowrap text-[#1c1c22]",
              t.width,
              active === i ? "bg-white" : "bg-[#f1eeef]"
            )}
          >
            {i < 2 && (
              <svg width="10" height="13" viewBox="0 0 10 13" className="absolute -top-px left-0" aria-hidden="true">
                <path d="M0 0h9L1 13H0z" fill="#ececf2" />
                <path d="M10 .5H9L0 13" fill="none" stroke="#8f7f84" />
              </svg>
            )}
            <span>{t.label}</span>
          </button>
        ))}
        <button aria-label="New tab" className="flex h-[13px] w-[31px] items-center justify-center rounded-t-sm border-t border-r border-[#8f7f84] bg-[#f1eeef] leading-none">+</button>
        <button aria-label="Tab list" className="mb-1 ml-auto"><Icon w={7} h={7}><path d="M2 3h12M2 7h12l-6 7z" fill="#222" stroke="#222" strokeWidth="2" /></Icon></button>
        <button aria-label="Close tab" className="mr-1.5 mb-1 ml-2"><Icon w={8} h={8}><path d="M3 3l10 10M13 3L3 13" stroke="#777" strokeWidth="1.500" /></Icon></button>
      </div>
      <div className="relative flex-1 overflow-hidden bg-white">
        <House />
        <div className="absolute top-0 left-[47%] flex h-[15px] w-[72px] -translate-x-1/2 items-center justify-center bg-[#85c5ec] text-[#111] shadow-[0_1px_2px_#9a9a9a]">View [Image] *</div>
        <div className="absolute top-0 right-0.5 flex h-[15px] items-center gap-px bg-[#85c5ec] pl-1 shadow-[0_1px_2px_#9a9a9a]">
          <button aria-label="Minimize view"><Icon w={8} h={9}><path d="M3 13h10" stroke="#111" strokeWidth="2.500" /></Icon></button>
          <button aria-label="Restore view"><Icon w={8} h={8}><path d="M5 5V2h9v8h-3M2 6h9v8H2z" stroke="#111" strokeWidth="2.500" /></Icon></button>
          <button aria-label="Close view"><Icon w={9} h={9}><path d="M2 2l12 12M14 2L2 14" stroke="#111" strokeWidth="3" /></Icon></button>
        </div>
      </div>
    </main>
  );
}

/* ---------- Project navigator ---------- */

const treeArt: Record<string, ReactNode> = {
  views: <path d="M2 2h12v5H2zM1 7h14v7H1zM4 9h3v5M9 9h4v3H9zM5 2v3M11 2v3" strokeWidth="1.200" />,
  plan: (
    <>
      <path d="M2 2h13v6h-4v7H2z" fill="#4e9edc" stroke="#3b5368" />
      <path d="M5 2v5h4M7 15v-4H3M11 5h4" stroke="#fff" strokeWidth="1.300" />
    </>
  ),
  section: <path d="M1 8l3-3c2-3 6-3 8 0l3 3-3 3c-2 3-6 3-8 0zM8 1v14" strokeWidth="1.300" />,
  sheet: <path d="M3 1h7l4 4v10H3zM10 1v4h4M5 8h7M5 11h7M5 13h7" fill="#eee" strokeWidth="1.300" />,
  mood: (
    <>
      <path d="M3 1h7l4 4v10H3z" fill="#fff" />
      <path d="M4 6h4v8H4z" fill="#2c83c3" stroke="none" />
      <path d="M9 9h4v5H9z" fill="#e98a1d" stroke="none" />
    </>
  ),
  rendering: (
    <>
      <circle cx="8" cy="7" r="6" fill="url(#orange)" stroke="none" />
      <path d="M5 14h6" stroke="#e0a04c" strokeWidth="2" />
    </>
  ),
  schedule: (
    <>
      <path d="M1 3h14v10H1z" fill="#eee" stroke="#bbb" />
      <path d="M3 4v8M6 4v8" stroke="#666" strokeWidth="1.500" />
    </>
  ),
  zones: <path d="M1 2h14v12H1zM4 2v12M4 5h8M7 5v9M7 9h6M10 9v5" strokeWidth="1.300" />,
};

interface TreeNode {
  label: string;
  pad: string;
  art?: string;
  arrow?: "open" | "closed" | "none";
  leaf?: boolean;
  tone?: string;
}

const tree: TreeNode[] = [
  { label: "Views (3)", pad: "pl-1", art: "views", arrow: "open", tone: "font-bold text-black" },
  { label: "Floor plan", pad: "pl-3", art: "plan", arrow: "open" },
  { label: "MainBuilding", pad: "pl-5", arrow: "open" },
  { label: "Roof", pad: "pl-[37px]", leaf: true, tone: "text-[#555]" },
  { label: "2F", pad: "pl-[37px]", leaf: true, tone: "text-[#555]" },
  { label: "G.L", pad: "pl-[37px]", leaf: true, tone: "text-[#555]" },
  { label: "Foundatioin", pad: "pl-[37px]", leaf: true, tone: "text-[#555]" },
  { label: "View", pad: "pl-3", arrow: "open" },
  { label: "View", pad: "pl-5", arrow: "none", tone: "font-bold text-black" },
  { label: "Section", pad: "pl-3", art: "section", arrow: "open" },
  { label: "A-A Section", pad: "pl-5", art: "section", arrow: "none" },
  { label: "Elevation", pad: "pl-3", art: "views", arrow: "none" },
  { label: "Plot layout", pad: "pl-3", art: "sheet", arrow: "none" },
  { label: "Mood board", pad: "pl-3", art: "mood", arrow: "none", tone: "text-[#8c8c8c]" },
  { label: "Rendering", pad: "pl-3", art: "rendering", arrow: "none" },
  { label: "Schedules", pad: "pl-3", art: "schedule", arrow: "none" },
  { label: "Zones", pad: "pl-1", art: "zones", arrow: "closed" },
];

function Navigator() {
  return (
    <aside className="w-[133px] shrink-0 border-l-2 border-[#d0d0d4] bg-white">
      <div className="flex h-[19px] items-center bg-linear-to-b from-[#efeff2] to-[#e6e6ea] pr-[3px] pl-0.5 text-[#111]">
        <h2>Project navigator</h2>
        <button aria-label="Pin navigator" className="ml-auto"><Pin /></button>
      </div>
      <ul className="mt-1 flex h-54 flex-col text-[#1d1d24]">
        {tree.map((n, i) => (
          <li key={i} className={clsx("flex flex-1 items-center whitespace-nowrap", n.pad, n.tone)}>
            {n.leaf ? (
              <>
                <svg width="10" height="12" viewBox="0 0 10 12" className="mr-[5px] shrink-0" aria-hidden="true">
                  <path d="M.5 0v12M1 5.500h9" stroke="#aaa" />
                </svg>
                {n.label}
              </>
            ) : (
              <>
                <span className="flex w-2 shrink-0">
                  {n.arrow === "open" && <Icon w={6} h={6}><path d="M14 2v12H2z" fill="#222" /></Icon>}
                  {n.arrow === "closed" && <Icon w={6} h={6}><path d="M4 1l8 7-8 7z" fill="#222" /></Icon>}
                </span>
                <span className="mr-[3px] flex w-3 shrink-0">{n.art && <Icon w={12} h={11}>{treeArt[n.art]}</Icon>}</span>
                {n.label}
              </>
            )}
          </li>
        ))}
      </ul>
    </aside>
  );
}

/* ---------- Status bar ---------- */

function StatusButton({ name, width = "w-[30px]", lit = false, children }: { name: string; width?: string; lit?: boolean; children: ReactNode }) {
  return (
    <button
      aria-label={name}
      className={clsx(
        "flex h-[26px] shrink-0 items-center justify-center border border-[#c6c6cc]",
        width,
        lit ? "bg-[#e9eef5]" : "bg-linear-to-b from-[#e8e8e9] to-[#d4d4d5]"
      )}
    >
      {children}
    </button>
  );
}

function DropButton({ name }: { name: string }) {
  return (
    <button aria-label={name} className="flex h-[18px] w-[19px] shrink-0 items-center justify-center border border-[#d0d0d6] bg-white">
      <Icon w={7} h={7}><path d="M2 5l6 6 6-6" stroke="#444" strokeWidth="1.500" /></Icon>
    </button>
  );
}

function StatusBar() {
  return (
    <footer className="flex h-[27px] shrink-0 items-start border-t border-[#b2b2ba] bg-[#e9e9f0] text-[#1c1c24]">
      <div className="flex shrink-0 gap-0.5">
        <StatusButton name="Settings" width="w-[26px]">
          <Icon w={18} h={18}>
            <path d="M6.500 3l.5-2h2l.5 2 2 1 2-.5 1 2L13 7v2l1.500 1.500-1 2-2-.5-2 1-.5 2H7l-.5-2-2-1-2 .5-1-2L3 9V7L1.500 5.500l1-2 2 .5z" fill="#444" stroke="#222" />
            <circle cx="8" cy="8" r="3.500" fill="#ddd" stroke="#222" />
            <circle cx="8" cy="8" r="4.700" stroke="#bbb" strokeWidth=".7" />
          </Icon>
        </StatusButton>
        <StatusButton name="Grid">
          <Icon w={18} h={18}>
            <path d="M1 2h3v3H1zM6.500 2h3v3h-3zM12 2h3v3h-3zM1 7h3v3H1zM6.500 7h3v3h-3zM12 7h3v3h-3zM1 12h3v3H1zM6.500 12h3v3h-3zM12 12h3v3h-3z" fill="#8a8a8d" stroke="none" />
          </Icon>
        </StatusButton>
        <StatusButton name="Magnet">
          <Icon w={20} h={20}>
            <path d="M4 10c4 5 9 3 9-1 0-2-2-3-3-5" stroke="#d7372b" strokeWidth="3.500" />
            <path d="M1 9l3-2 2 2-3 2zM7 3l3-2 2 3-3 2z" fill="#fff" stroke="#999" />
          </Icon>
        </StatusButton>
        <StatusButton name="Angles">
          <Icon w={21} h={21}><path d="M2 1v13h13M3 13L5 2M3 13L9 4M3 13l11-8M3 13l10-4" stroke="#888" /></Icon>
        </StatusButton>
        <StatusButton name="Select page">
          <Icon w={20} h={20}>
            <path d="M2 1h6l4 4v10H2zM8 1v4h4" fill="#eee" stroke="#777" />
            <path d="M7 6l8 5-3 1 2 3-1 1-3-3-2 2z" fill="#222" stroke="none" />
          </Icon>
        </StatusButton>
        <StatusButton name="Workplane" lit>
          <Icon w={22} h={22}>
            <path d="M2 4l6-3 6 3v6l-6 3-6-3zM2 4l6 2 6-2M8 6v6" stroke="#999" />
            <path d="M1 11l7 2 7-2v2l-7 2.500L1 13z" fill="#777" stroke="#555" />
            <path d="M1 10l7-2 7 2-7 3z" fill="#bbb" stroke="#777" />
          </Icon>
        </StatusButton>
      </div>
      <div className="ml-0.5 flex h-[26px] shrink-0 gap-px border-r border-[#b8b8c0] bg-white pt-0.5 pr-[5px] pl-0.5">
        <label className="flex h-[18px] w-[245px] items-center gap-[3px] border border-[#d0d0d6] pl-0.5">
          <Icon w={10} h={10}><path d="M1 8c4-6 10-6 14 0-4 5-10 5-14 0z" fill="#8291ad" /><circle cx="8" cy="8" r="3.500" fill="#222c48" /></Icon>
          <select aria-label="View list" className="min-w-0 flex-1 appearance-none outline-none"><option>View</option></select>
        </label>
        <DropButton name="Open view list" />
      </div>
      <div className="ml-[3px] flex shrink-0 gap-0.5">
        <StatusButton name="Level up" lit><ArrowUp size={17} /></StatusButton>
        <StatusButton name="Level down" lit><ArrowDown size={17} /></StatusButton>
        <div className="flex">
          <StatusButton name="Build 3D">
            <Icon w={20} h={20}>
              <path d="M2 13L10 5M5 3c4-2 7-1 9 3M9 4l4 3" stroke="#8e6812" strokeWidth="2.800" />
              <path d="M2 13L10 5M5 3c4-2 7-1 9 3" stroke="#f0b526" strokeWidth="1.700" />
              <path d="M8 11h2.500v4H8M8.500 13h2M12 11v4h1.500l1-1v-2l-1-1z" stroke="#333" />
            </Icon>
          </StatusButton>
          <StatusButton name="Build options" width="w-[21px]"><Caret /></StatusButton>
        </div>
      </div>
      <div className="ml-px flex h-[26px] min-w-0 flex-1 bg-white">
        <label className="flex h-6 min-w-0 flex-1 items-center gap-1 bg-[#f0f0f1] pl-0.5">
          <span className="h-[18px] w-[7px] bg-black" />
          <select aria-label="Material" className="min-w-0 flex-1 appearance-none outline-none"><option>Slab01</option></select>
        </label>
        <div className="pt-0.5 pr-[5px]"><DropButton name="Open material list" /></div>
      </div>
      <div className="flex shrink-0 gap-[3px]">
        <div className="flex">
          <StatusButton name="Layers"><Icon w={18} h={18}><path d="M1 5l8-4 6 3-8 4zM1 5v2l6 3 8-4V4M1 8v2l6 3 8-4V7M1 11v1l6 3 8-4v-1" fill="#e8e8e8" stroke="#888" /></Icon></StatusButton>
          <StatusButton name="Layer list" width="w-5"><Caret /></StatusButton>
        </div>
        <div className="flex">
          <StatusButton name="North"><Icon w={20} h={20}><path d="M8 1l5 14-5-4-5 4z" fill="#ccc" stroke="#333" /><path d="M8 1v10l-5 4z" fill="#777" stroke="none" /></Icon></StatusButton>
          <StatusButton name="North list" width="w-5"><Caret /></StatusButton>
        </div>
        <StatusButton name="Rotate" lit>
          <Icon w={20} h={18}><circle cx="6.500" cy="8" r="5.500" stroke="#333" strokeWidth="1.300" /><path d="M4 8h8M10 5l4 3-4 3z" fill="#222" stroke="#222" strokeWidth="1.700" /></Icon>
        </StatusButton>
        <StatusButton name="Geolocation">
          <Icon w={20} h={20}>
            <path d="M2 15V2M0 4l2-3 2 3M2 14h12M12 12l3 2-3 2" stroke="#444" />
            <circle cx="9" cy="7" r="5" fill="#eee" stroke="#444" />
            <path d="M5 5l3-2 2 2-2 3-2 0zM10 7l3-2v4l-2 2z" fill="#444" stroke="none" />
          </Icon>
        </StatusButton>
        <div className="flex">
          <StatusButton name="Polyline" lit>
            <Icon w={20} h={20}><path d="M4 11l8-6" stroke="#4b8ed6" strokeWidth="1.500" /><path d="M1 10h4v4H1zM11 2h4v4h-4z" fill="#fff" stroke="#222" strokeWidth="1.300" /></Icon>
          </StatusButton>
          <StatusButton name="Polyline list" width="w-[21px]" lit><Caret className="opacity-60" /></StatusButton>
        </div>
        <button aria-label="More tools" className="mt-px flex h-4 w-2.5 items-center justify-center border border-[#c8c8ce] bg-white"><Caret /></button>
        <StatusButton name="Gallery"><Film size={20} /></StatusButton>
        <StatusButton name="Render"><Ball id="orange" size={20} /></StatusButton>
      </div>
      <p className="flex h-[26px] w-[128px] shrink-0 items-center gap-2 pl-[5px] whitespace-nowrap">
        <span>(x) 22981.1</span>
        <span>(y) -3312.1 mm</span>
      </p>
    </footer>
  );
}

const balls = [
  { id: "grey", mid: "#e0e0e0", edge: "#b0b0b0" },
  { id: "yellow", mid: "#f7dd3c", edge: "#dcb71c" },
  { id: "blue", mid: "#8ecbea", edge: "#4b8db0" },
  { id: "orange", mid: "#f8b955", edge: "#cf7c1c" },
];

export default function App() {
  return (
    <div className="flex min-h-screen flex-col bg-white pt-[18px] pb-[19px] font-['Noto_Sans','Open_Sans',sans-serif] text-[8px] leading-[11px] text-[#2b2c38]">
      <svg width="0" height="0" className="absolute" aria-hidden="true">
        <defs>
          {balls.map((b) => (
            <radialGradient key={b.id} id={b.id} cx=".4" cy=".3" r=".7">
              <stop offset="0" stopColor="#fff" />
              <stop offset=".5" stopColor={b.mid} />
              <stop offset="1" stopColor={b.edge} />
            </radialGradient>
          ))}
          <linearGradient id="film" x2="1" y2="1">
            <stop offset="0" stopColor="#ffcf3e" />
            <stop offset="1" stopColor="#f47f08" />
          </linearGradient>
        </defs>
      </svg>
      <TitleBar />
      <MenuBar />
      <Ribbon />
      <ViewBar />
      <div className="flex flex-1">
        <Dashboard />
        <Workspace />
        <Navigator />
      </div>
      <StatusBar />
    </div>
  );
}
